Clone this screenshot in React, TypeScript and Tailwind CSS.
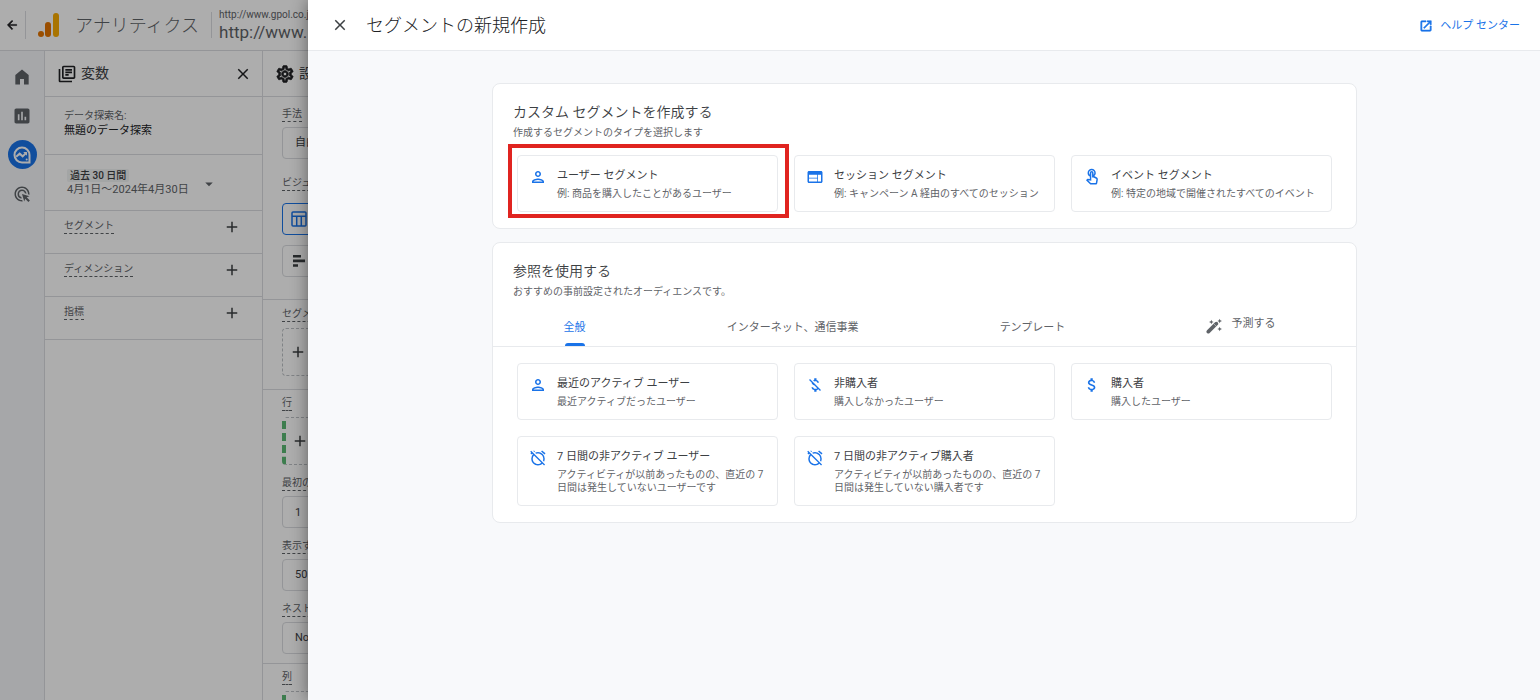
import React, { useState } from 'react'
import {
    MdAdd,
    MdAdsClick,
    MdAlarmOff,
    MdArrowBack,
    MdArrowDropDown,
    MdAttachMoney,
    MdClose,
    MdInsertChart,
    MdMoneyOff,
    MdOpenInNew,
    MdOutlineLibraryBooks,
    MdOutlinePerson,
    MdOutlineSettings,
    MdOutlineTouchApp,
    MdWeb,
} from 'react-icons/md'

// -------------------------------------------------------
// Icons
// -------------------------------------------------------

// Thickens a Material icon, skipping its invisible bounding path
const BOLD_ICON = '[&>path:not([fill=none])]:stroke-1'

function AnalyticsLogo() {
    return (
        <svg viewBox="0 0 22 24" className="w-[22px] h-6 shrink-0">
            <rect x="15" y="0" width="6" height="24" rx="3" fill="#f9ab00" />
            <rect x="7" y="9" width="6" height="15" rx="3" fill="#e37400" />
            <circle cx="3" cy="21" r="3" fill="#e37400" />
        </svg>
    )
}

function HomeIcon() {
    return (
        <svg viewBox="0 0 24 24" className="w-5 h-5" fill="currentColor">
            <path d="M12 3 4 9.6V21h5.6v-6.6h4.8V21H20V9.6z" />
        </svg>
    )
}

function ExploreIcon() {
    return (
        <svg viewBox="0 0 24 24" className="w-5 h-5" fill="none" stroke="currentColor">
            <path d="M12 3a9 9 0 1 0 0 18h9v-9a9 9 0 0 0-9-9z" strokeWidth="2.4" />
            <path d="m5 14 4.2-3.6 3.6 3.2L17 9.4" strokeWidth="2.4" />
            <path d="M13.4 8.4H18V13z" fill="currentColor" stroke="none" />
            <circle cx="17.6" cy="17.4" r="1.2" fill="currentColor" stroke="none" />
        </svg>
    )
}

function TableIcon() {
    return (
        <svg viewBox="0 0 16 16" className="w-4 h-4 shrink-0" fill="none" stroke="currentColor" strokeWidth="1.5">
            <rect x="1" y="1" width="14" height="14" rx="1" />
            <path d="M1 5.2h14M5.7 5.2V15M10.3 5.2V15" />
        </svg>
    )
}

function BarsIcon() {
    return (
        <svg viewBox="0 0 12 12" className="w-3 h-3 shrink-0" fill="currentColor">
            <path d="M0 0h8v2.6H0zM0 4.6h12v2.6H0zM0 9.2h5v2.6H0z" />
        </svg>
    )
}

function WandIcon() {
    return (
        <svg viewBox="0 0 24 24" className="mt-[2px] mr-[9px] w-4 h-4 shrink-0" fill="currentColor">
            <path d="m8 2.500 1 2.500L11.500 6 9 7 8 9.500 7 7 4.500 6 7 5z" />
            <path d="m20.500 1 1 2.500L24 4.500l-2.500 1-1 2.500-1-2.500-2.500-1 2.500-1z" />
            <path d="m20.500 13 1 2.500 2.500 1-2.500 1-1 2.500-1-2.500-2.500-1 2.500-1z" />
            <path d="m3.500 20.500 12-12" stroke="currentColor" strokeWidth="5.500" strokeLinecap="round" />
            <path d="m12.500 9.500 2 2" stroke="#ffffff" strokeWidth="1" />
        </svg>
    )
}

// -------------------------------------------------------
// Variables column
// -------------------------------------------------------

const VARIABLE_ROWS = ['セグメント', 'ディメンション', '指標']

function DottedText({ children }: { children: React.ReactNode }) {
    return (
        <span className="block w-fit border-b border-dashed border-[#5f6368] text-[10px] leading-[14px] whitespace-nowrap text-[#5f6368]">
            {children}
        </span>
    )
}

function VariablesPanel() {
    return (
        <section className="w-[218px] shrink-0 border-r border-[#dadce0] bg-white">
            <div className="flex h-[46px] items-center border-b border-[#dadce0] pl-3 pr-[10px]">
                <MdOutlineLibraryBooks size={20} />
                <h2 className="ml-1 flex-1 text-[14px] text-[#3c4043]">変数</h2>
                <button aria-label="変数を閉じる">
                    <MdClose size={18} />
                </button>
            </div>

            <div className="h-[58px] border-b border-[#dadce0] px-[19px] pt-3">
                <label htmlFor="exploration" className="block text-[10px] leading-[14px] text-[#5f6368]">
                    データ探索名:
                </label>
                <input
                    id="exploration"
                    defaultValue="無題のデータ探索"
                    className="block h-4 w-full text-[11px] leading-4 outline-none"
                />
            </div>

            <button className="flex h-14 w-full items-center border-b border-[#dadce0] pt-[2px] pl-[22px] pr-[44px] text-left">
                <span className="flex-1 whitespace-nowrap">
                    <span className="block w-fit rounded-xs bg-[#f1f3f4] px-[3px] text-[10px] leading-[13px] font-medium text-[#3c4043]">
                        過去 30 日間
                    </span>
                    <span className="block text-[11px] leading-4 text-[#5f6368]">4月1日～2024年4月30日</span>
                </span>
                <MdArrowDropDown size={18} className="shrink-0 text-[#5f6368]" />
            </button>

            {VARIABLE_ROWS.map((name) => (
                <div key={name} className="flex h-[43px] items-start border-b border-[#dadce0] pt-[7px] pl-[19px] pr-[21px]">
                    <div className="flex-1 pt-px">
                        <DottedText>{name}</DottedText>
                    </div>
                    <button aria-label={`${name}を追加`}>
                        <MdAdd size={18} className="text-[#3c4043]" />
                    </button>
                </div>
            ))}
        </section>
    )
}

// -------------------------------------------------------
// Settings column
// -------------------------------------------------------

interface FieldProps {
    id: string
    label: string
    children: React.ReactNode
}

function Field({ id, label, children }: FieldProps) {
    return (
        <div>
            <label htmlFor={id} className="block">
                <DottedText>{label}</DottedText>
            </label>
            {children}
        </div>
    )
}

function DropZone({ green }: { green?: boolean }) {
    return (
        <button
            aria-label="追加"
            className={[
                'mt-[6px] flex h-12 w-full items-center rounded border border-dashed border-[#bdc1c6]',
                green ? 'border-l-4 border-l-[#5bb974] pl-[5px]' : 'pl-[6px]',
            ].join(' ')}
        >
            <MdAdd size={18} className="shrink-0 text-[#3c4043]" />
        </button>
    )
}

const CONTROL =
    'mt-[5px] h-8 w-full appearance-none rounded border border-[#dadce0] bg-white px-3 text-[11px] text-[#3c4043] block'

function SettingsPanel() {
    return (
        <section className="w-[218px] shrink-0 border-r border-[#dadce0] bg-white">
            <div className="flex h-[46px] items-center border-b border-[#dadce0] pl-3">
                <MdOutlineSettings size={20} className={BOLD_ICON} />
                <h2 className="ml-1 text-[14px] text-[#3c4043]">設定</h2>
            </div>

            <div className="h-[203px] border-b border-[#dadce0] px-[19px] pt-[10px]">
                <Field id="technique" label="手法">
                    <select id="technique" className={CONTROL}>
                        <option>自由形式</option>
                    </select>
                </Field>
                <div className="mt-[17px]">
                    <DottedText>ビジュアリゼーション</DottedText>
                </div>
                <button
                    aria-label="表"
                    className="mt-3 flex h-8 w-full items-center rounded border border-[#1a73e8] pl-2 text-[#1a73e8]"
                >
                    <TableIcon />
                </button>
                <button
                    aria-label="棒グラフ"
                    className="mt-[10px] flex h-8 w-full items-center rounded border border-[#dadce0] pl-[10px] text-[#3c4043]"
                >
                    <BarsIcon />
                </button>
            </div>

            <div className="h-[90px] border-b border-[#dadce0] px-[19px] pt-[7px]">
                <DottedText>セグメントの比較</DottedText>
                <DropZone />
            </div>

            <div className="flex h-[274px] flex-col gap-[11px] border-b border-[#dadce0] px-[19px] pt-[6px]">
                <div>
                    <DottedText>行</DottedText>
                    <DropZone green />
                </div>
                <Field id="start-row" label="最初の行">
                    <input id="start-row" defaultValue="1" className={CONTROL} />
                </Field>
                <Field id="row-count" label="表示する行数">
                    <select id="row-count" className={CONTROL}>
                        <option>50</option>
                    </select>
                </Field>
                <Field id="nested" label="ネストされた行">
                    <select id="nested" className={CONTROL}>
                        <option>No</option>
                    </select>
                </Field>
            </div>

            <div className="px-[19px] pt-[6px]">
                <DottedText>列</DottedText>
                <DropZone green />
            </div>
        </section>
    )
}

// -------------------------------------------------------
// Drawer content
// -------------------------------------------------------

interface Option {
    icon: React.ComponentType<{ size?: number; className?: string }>
    title: string
    description: string
    highlighted?: boolean
}

const CUSTOM_SEGMENTS: Option[] = [
    {
        icon: MdOutlinePerson,
        title: 'ユーザー セグメント',
        description: '例: 商品を購入したことがあるユーザー',
        highlighted: true,
    },
    { icon: MdWeb, title: 'セッション セグメント', description: '例: キャンペーン A 経由のすべてのセッション' },
    { icon: MdOutlineTouchApp, title: 'イベント セグメント', description: '例: 特定の地域で開催されたすべてのイベント' },
]

const SUGGESTED_SEGMENTS: Option[] = [
    { icon: MdOutlinePerson, title: '最近のアクティブ ユーザー', description: '最近アクティブだったユーザー' },
    { icon: MdMoneyOff, title: '非購入者', description: '購入しなかったユーザー' },
    { icon: MdAttachMoney, title: '購入者', description: '購入したユーザー' },
    {
        icon: MdAlarmOff,
        title: '7 日間の非アクティブ ユーザー',
        description: 'アクティビティが以前あったものの、直近の 7 日間は発生していないユーザーです',
    },
    {
        icon: MdAlarmOff,
        title: '7 日間の非アクティブ購入者',
        description: 'アクティビティが以前あったものの、直近の 7 日間は発生していない購入者です',
    },
]

function OptionCard({ icon: Icon, title, description, highlighted }: Option) {
    return (
        <button className="relative flex items-start gap-[10px] rounded border border-[#e8eaed] bg-white pt-[11px] pr-3 pb-[11px] pl-[11px] text-left">
            <Icon size={18} className="mt-px shrink-0 text-[#1a73e8]" />
            <span className="min-w-0">
                <span className="block text-[11px] leading-[18px] text-[#3c4043]">{title}</span>
                <span className="mt-[2px] block text-[10px] leading-[13px] text-[#5f6368]">{description}</span>
            </span>
            {/* Red callout frame */}
            {highlighted && (
                <span className="pointer-events-none absolute -top-3 -right-3 -bottom-[7px] -left-[10px] border-4 border-[#e02420]" />
            )}
        </button>
    )
}

function CardHeading({ title, description }: { title: string; description: string }) {
    return (
        <div className="px-5 pt-[18px]">
            <h2 className="text-[14px] leading-5 font-[350] text-[#3c4043]">{title}</h2>
            <p className="mt-1 text-[10px] leading-[14px] text-[#5f6368]">{description}</p>
        </div>
    )
}

const TABS = ['全般', 'インターネット、通信事業', 'テンプレート', '予測する']

function SegmentDrawer() {
    const [activeTab, setActiveTab] = useState('全般')

    return (
        <aside className="absolute inset-y-0 right-0 flex w-4/5 flex-col bg-[#f8f9fb] shadow-[0_0_16px_rgba(0,0,0,0.45)]">
            <header className="flex h-[51px] shrink-0 items-center border-b border-[#e8eaed] bg-white pr-5 pl-[23px]">
                <button aria-label="閉じる">
                    <MdClose size={18} className="text-[#3c4043]" />
                </button>
                <h1 className="ml-[17px] flex-1 text-[18px] font-light text-[#202124]">セグメントの新規作成</h1>
                <a href="#help" className="flex items-center gap-[7px] pt-[2px] text-[11px] text-[#1a73e8]">
                    <MdOpenInNew size={14} className={BOLD_ICON} />
                    ヘルプ センター
                </a>
            </header>

            <main className="min-h-0 flex-1 overflow-y-auto pt-8 pr-6 pl-[25px]">
                <div className="mx-auto flex max-w-[865px] flex-col gap-[13px]">
                    <section className="rounded-lg border border-[#e8eaed] bg-white pb-4">
                        <CardHeading
                            title="カスタム セグメントを作成する"
                            description="作成するセグメントのタイプを選択します"
                        />
                        <div className="mt-[15px] grid grid-cols-3 gap-4 px-6">
                            {CUSTOM_SEGMENTS.map((option) => (
                                <OptionCard key={option.title} {...option} />
                            ))}
                        </div>
                    </section>

                    <section className="rounded-lg border border-[#e8eaed] bg-white pb-4">
                        <CardHeading title="参照を使用する" description="おすすめの事前設定されたオーディエンスです。" />
                        <div role="tablist" className="mt-[9px] flex h-[39px] border-b border-[#e8eaed] pr-[10px]">
                            {TABS.map((tab) => (
                                <button
                                    key={tab}
                                    role="tab"
                                    aria-selected={tab === activeTab}
                                    onClick={() => setActiveTab(tab)}
                                    className={[
                                        'flex flex-auto justify-center text-[11px] leading-4',
                                        tab === activeTab ? 'text-[#1a73e8]' : 'text-[#5f6368]',
                                        tab === '予測する' ? 'pt-2' : 'pt-3',
                                    ].join(' ')}
                                >
                                    {tab === '予測する' && <WandIcon />}
                                    <span className="flex h-full flex-col items-center justify-between">
                                        {tab}
                                        {tab === activeTab && <span className="h-[3px] w-5 rounded-t bg-[#1a73e8]" />}
                                    </span>
                                </button>
                            ))}
                        </div>
                        <div className="mt-4 grid grid-cols-3 gap-4 px-6">
                            {SUGGESTED_SEGMENTS.map((option) => (
                                <OptionCard key={option.title} {...option} />
                            ))}
                        </div>
                    </section>
                </div>
            </main>
        </aside>
    )
}

// -------------------------------------------------------
// Page
// -------------------------------------------------------

export default function App() {
    return (
        <div
            lang="ja"
            className="relative flex h-screen flex-col overflow-hidden bg-white font-[Roboto,'Noto_Sans_CJK_JP',sans-serif] text-[#202124]"
        >
            <header className="flex h-[51px] shrink-0 items-center border-b border-[#dadce0] pl-[5px]">
                <button aria-label="戻る">
                    <MdArrowBack size={14} className={BOLD_ICON} />
                </button>
                <span className="ml-[6px] h-7 w-px bg-[#dadce0]" />
                <span className="ml-3 flex items-center gap-[15px]">
                    <AnalyticsLogo />
                    <span className="text-[18px] font-light text-[#5f6368]">アナリティクス</span>
                </span>
                <span className="ml-3 h-[26px] w-px bg-[#dadce0]" />
                <span className="ml-[7px] pt-[2px] whitespace-nowrap text-[#5f6368]">
                    <span className="block text-[10px] leading-3">http://www.gpol.co.jp</span>
                    <span className="block text-[17px] leading-[22px]">http://www.</span>
                </span>
            </header>

            <div className="flex min-h-0 flex-1">
                <nav className="flex w-[45px] shrink-0 flex-col items-center gap-[10px] border-r border-[#dadce0] bg-[#f5f7fa] pt-[11px] text-[#5f6368]">
                    <a href="#home" aria-label="ホーム" className="flex h-[29px] w-[29px] items-center justify-center">
                        <HomeIcon />
                    </a>
                    <a href="#reports" aria-label="レポート" className="flex h-[29px] w-[29px] items-center justify-center">
                        <MdInsertChart size={20} />
                    </a>
                    <a
                        href="#explore"
                        aria-label="探索"
                        className="flex h-[29px] w-[29px] items-center justify-center rounded-full bg-[#1a73e8] text-white"
                    >
                        <ExploreIcon />
                    </a>
                    <a href="#ads" aria-label="広告" className="flex h-[29px] w-[29px] items-center justify-center">
                        <MdAdsClick size={18} />
                    </a>
                </nav>
                <VariablesPanel />
                <SettingsPanel />
            </div>

            {/* Scrim + drawer */}
            <div className="absolute inset-0 bg-black/32">
                <SegmentDrawer />
            </div>
        </div>
    )
}
